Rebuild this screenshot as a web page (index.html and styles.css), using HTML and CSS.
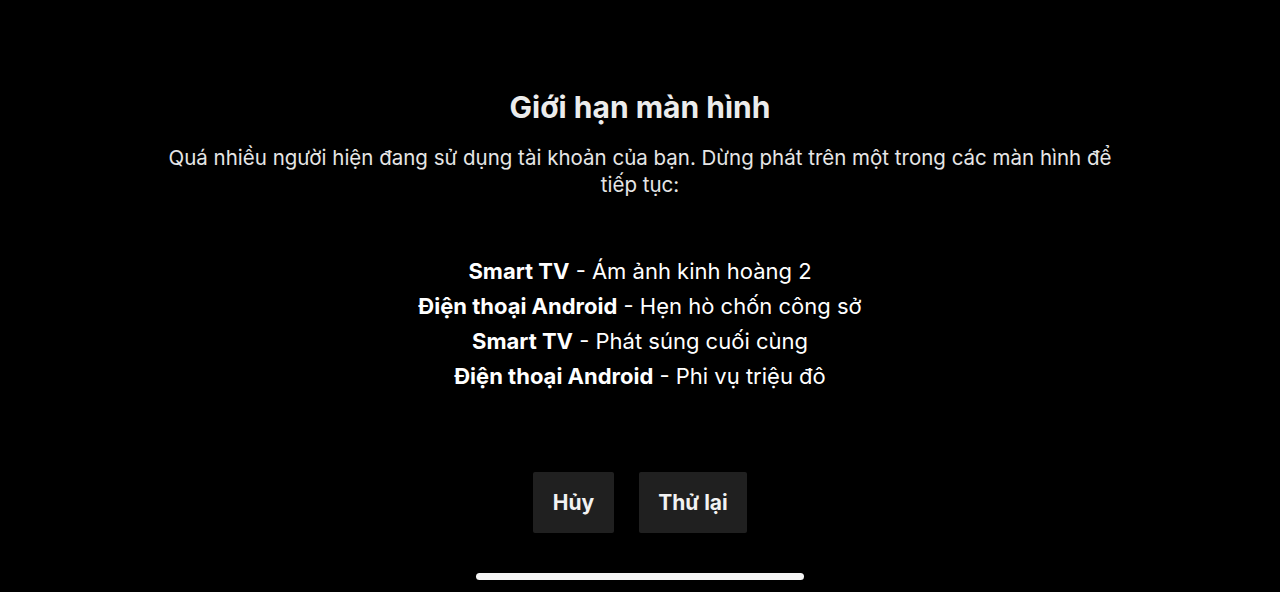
FILE: index.html
```html
<!DOCTYPE html>
<html lang="vi">
<head>
<meta charset="utf-8">
<link rel="stylesheet" href="styles.css">
</head>
<body>
<main class="screen">
  <section class="dialog">
    <h1 class="title">Giới hạn màn hình</h1>
    <p class="message">Quá nhiều người hiện đang sử dụng tài khoản của bạn. Dừng phát trên một trong các màn hình để tiếp tục:</p>
    <ul class="devices">
      <li><b>Smart TV</b> - Ám ảnh kinh hoàng 2</li>
      <li><b>Điện thoại Android</b> - Hẹn hò chốn công sở</li>
      <li><b>Smart TV</b> - Phát súng cuối cùng</li>
      <li><b>Điện thoại Android</b> - Phi vụ triệu đô</li>
    </ul>
    <div class="actions">
      <button class="btn btn-cancel">Hủy</button>
      <button class="btn btn-retry">Thử lại</button>
    </div>
  </section>
  <div class="home-indicator"></div>
</main>
</body>
</html>
```
FILE: styles.css
```css
html, body {
  margin: 0;
  padding: 0;
  background: #000;
}
body {
  width: 1280px;
  height: 592px;
  overflow: hidden;
  font-family: Inter, "Noto Sans", "Liberation Sans", sans-serif;
  color: #fff;
}
.screen {
  height: 592px;
  display: flex;
  flex-direction: column;
  align-items: center;
}
.dialog {
  width: 955px;
  display: flex;
  flex-direction: column;
  align-items: center;
  text-align: center;
  padding-top: 87px;
}
.title {
  margin: 0;
  font-size: 30px;
  line-height: 40px;
  font-weight: 700;
  color: #ececec;
}
.message {
  margin: 17px 0 0;
  font-size: 20.5px;
  line-height: 27px;
  color: #e6e6e6;
}
.devices {
  list-style: none;
  margin: 56px 0 0;
  padding: 0;
  font-size: 22px;
  line-height: 35px;
  color: #fff;
}
.devices b {
  font-weight: 700;
}
.actions {
  display: flex;
  gap: 25px;
  margin-top: 78px;
}
.btn {
  height: 61px;
  border: 0;
  border-radius: 2px;
  background: #202020;
  color: #f2f2f2;
  font-family: inherit;
  font-size: 21px;
  font-weight: 700;
  padding: 0;
}
.btn-cancel { width: 81px; }
.btn-retry { width: 108px; }
.home-indicator {
  margin-top: auto;
  margin-bottom: 12px;
  width: 328px;
  height: 7px;
  border-radius: 4px;
  background: #f5f5f5;
}
```
